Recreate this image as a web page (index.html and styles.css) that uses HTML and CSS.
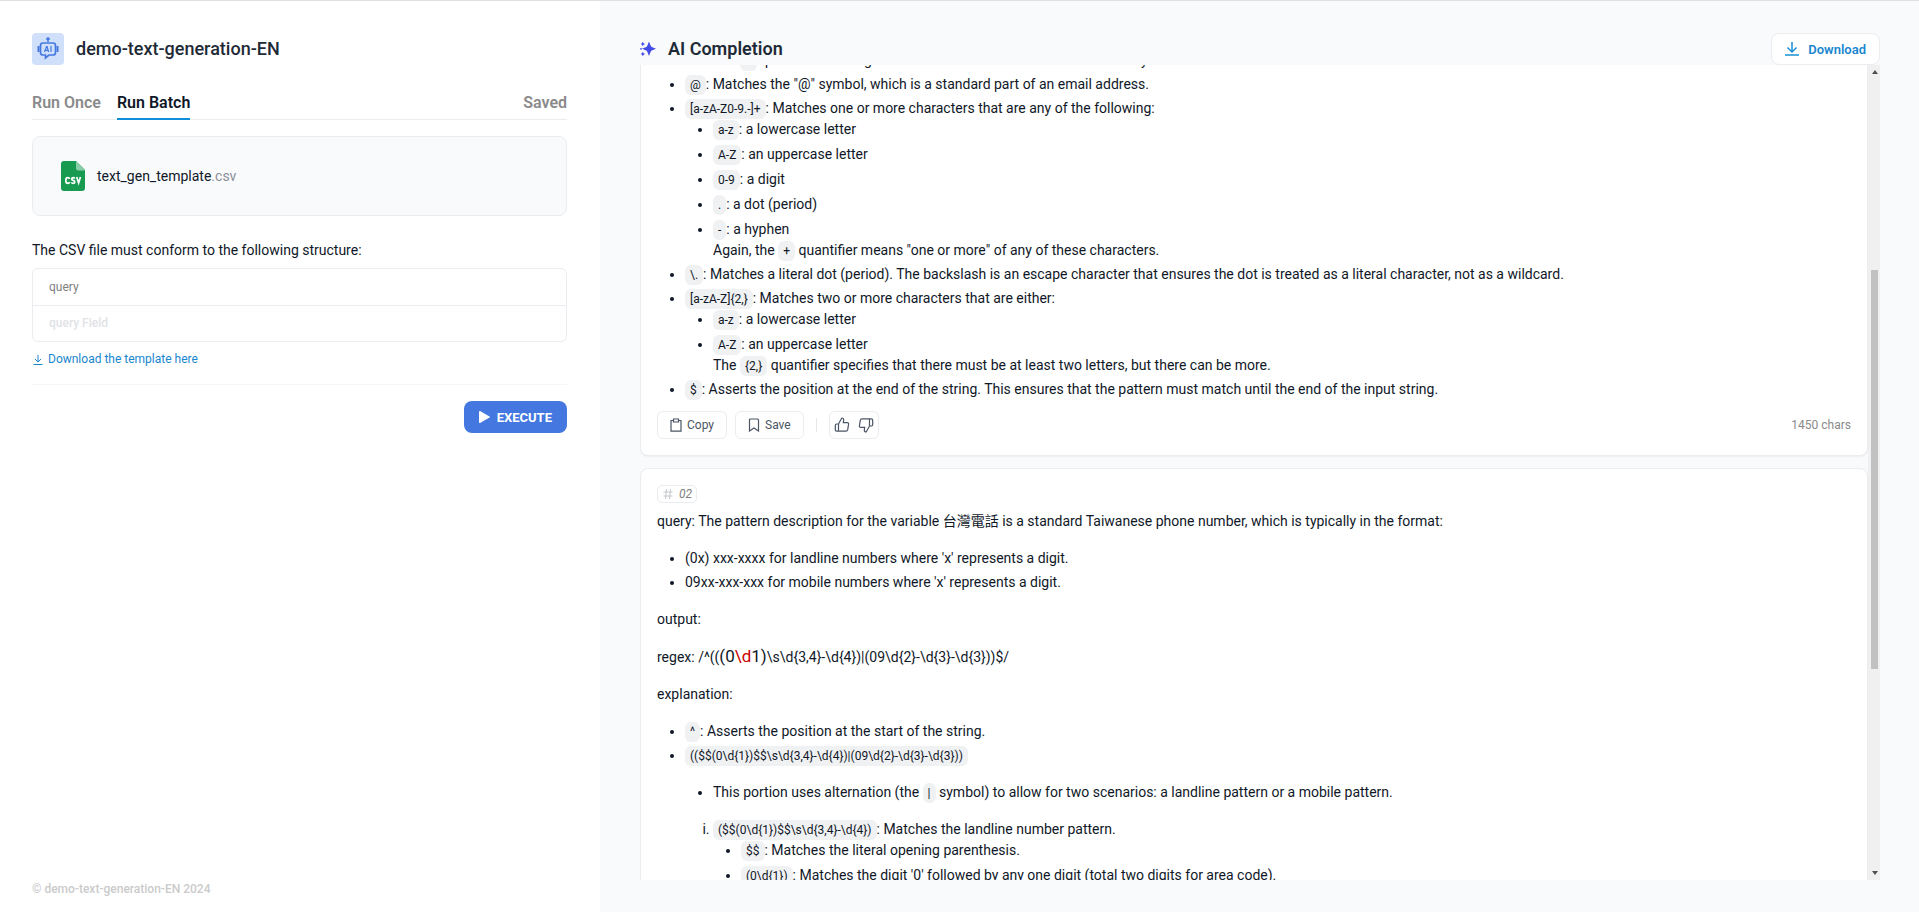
FILE: index.html
```html
<!DOCTYPE html>
<html lang="en">
<head>
<meta charset="utf-8">
<title>demo-text-generation-EN</title>
<link rel="stylesheet" href="styles.css">
</head>
<body>
<div class="app">
  <aside class="side">
    <header class="brand">
      <span class="brand-icon">
        <svg width="22" height="26" viewBox="0 0 22 26" fill="none" stroke="#4478e0" stroke-width="2"><path d="M11 1v5M9 3h4" stroke-width="1.5"/><path d="M6 7h10q2.500 0 2.500 2.500v7q0 2.500-2.500 2.500h-4l-3.500 3v-3H6q-2.500 0-2.500-2.500v-7Q3.500 7 6 7z" stroke-width="1.700"/><path d="M1.500 10v6M20.500 10v6"/><path d="M7.500 16l2-5.500h.6l1.500 5.500M8.500 14.300h2.800M14 10v6" stroke-width="1.200"/></svg>
      </span>
      <h1 class="title name">demo-text-generation-EN</h1>
    </header>
    <nav class="tabs">
      <button class="tab">Run Once</button>
      <button class="tab active">Run Batch</button>
      <button class="tab last">Saved</button>
    </nav>
    <div class="upload">
      <svg width="24" height="30" viewBox="0 0 24 30"><path d="M3 0h12l9 9v18q0 3-3 3H3q-3 0-3-3V3q0-3 3-3z" fill="#189b51"/><path d="M15 0l9 9.500h-7q-2 0-2-2z" fill="#8bcda8"/><g fill="none" stroke="#fff" stroke-width="1.700"><path d="M8.700 18q-.5-1.300-1.800-1.300-2 0-2 2v1.600q0 2 2 2 1.300 0 1.800-1.300"/><path d="M13.800 17.700q-.5-1-1.600-1-1.500 0-1.500 1.300 0 1.100 1.500 1.400 1.600.3 1.600 1.500 0 1.400-1.700 1.400-1.200 0-1.700-1"/><path d="M15.700 16l1.900 6 1.900-6"/></g></svg>
      <span>text_gen_template<span class="muted">.csv</span></span>
    </div>
    <p class="hint">The CSV file must conform to the following structure:</p>
    <table class="schema">
      <thead><tr><th scope="col">query</th></tr></thead>
      <tbody><tr><td>query Field</td></tr></tbody>
    </table>
    <a class="template" href="#"><svg width="10" height="12" viewBox="0 0 10 12" fill="none" stroke="#1a86cf"><path d="M5 1v6.500M2 5l3 3 3-3M.5 10.500h9"/></svg>Download the template here</a>
    <div class="run">
      <button class="execute"><svg width="11" height="12" viewBox="0 0 11 12" fill="#fff"><path d="M0 .5v11q.3.700 1 .4l9.500-5.300q.6-.6 0-1.200L1 .1Q.3-.2 0 .5z"/></svg>EXECUTE</button>
    </div>
    <footer class="copyright">© demo-text-generation-EN 2024</footer>
  </aside>
  <main class="main">
    <header class="main-head">
      <svg width="16" height="16" viewBox="0 0 16 16" fill="#444ce7"><path d="M9 .5l1.700 4.300q.3.800 1.100 1.100L16 7.800l-4.200 1.800q-.8.300-1.100 1.100L9 15l-1.700-4.300q-.3-.8-1.100-1.100L2 7.800l4.200-1.900q.8-.3 1.100-1.100z"/><path d="M2.800.8l.8 1.400 1.400.8-1.400.8-.8 1.400L2 3.800.6 3 2 2.200zM2.800 10.800l.8 1.400 1.400.8-1.400.8-.8 1.400-.8-1.400L.6 13l1.400-.8z"/><circle cx="1" cy="7.800" r=".9"/></svg>
      <h2 class="title">AI Completion</h2>
      <button class="download"><svg width="14" height="14" viewBox="0 0 14 14" fill="none" stroke="#1a90d5" stroke-width="1.500"><path d="M7 0v9.500M2.500 5.500L7 10l4.500-4.500M0 13h14"/></svg>Download</button>
    </header>
    <div class="scroller">
      <div class="results">
        <article class="card">
          <ul class="md">
            <li>
              <ul>
                <li>The <code>+</code> quantifier here signifies one or more of these characters in any.</li>
              </ul>
            </li>
            <li><code>@</code>: Matches the "@" symbol, which is a standard part of an email address.</li>
            <li><code>[a-zA-Z0-9.-]+</code>: Matches one or more characters that are any of the following:
              <ul>
                <li><code>a-z</code>: a lowercase letter</li>
                <li><code>A-Z</code>: an uppercase letter</li>
                <li><code>0-9</code>: a digit</li>
                <li><code>.</code>: a dot (period)</li>
                <li><code>-</code>: a hyphen<br>Again, the <code>+</code> quantifier means "one or more" of any of these characters.</li>
              </ul>
            </li>
            <li><code>\.</code>: Matches a literal dot (period). The backslash is an escape character that ensures the dot is treated as a literal character, not as a wildcard.</li>
            <li><code>[a-zA-Z]{2,}</code>: Matches two or more characters that are either:
              <ul>
                <li><code>a-z</code>: a lowercase letter</li>
                <li><code>A-Z</code>: an uppercase letter<br>The <code>{2,}</code> quantifier specifies that there must be at least two letters, but there can be more.</li>
              </ul>
            </li>
            <li><code>$</code>: Asserts the position at the end of the string. This ensures that the pattern must match until the end of the input string.</li>
          </ul>
          <div class="actions">
            <button class="act"><svg width="12" height="14" viewBox="0 0 12 14" fill="none" stroke="#4b5563" stroke-width="1.200"><path d="M3.500 2.500H1v10.700h10V2.500H8.500"/><path d="M3.500 1h5v3h-5z"/></svg>Copy</button>
            <button class="act"><svg width="12" height="14" viewBox="0 0 12 14" fill="none" stroke="#4b5563" stroke-width="1.200"><path d="M2.500 1h7q1 0 1 1v11L6 10l-4.500 3V2q0-1 1-1z"/></svg>Save</button>
            <span class="sep"></span>
            <span class="votes">
              <button class="vote" aria-label="Like"><svg width="16" height="16" viewBox="0 0 16 16" fill="none" stroke="#4b5563" stroke-width="1.200"><path d="M4.500 7L7.800 1q1.900 0 1.900 2L9.300 5.700h4q1.500 0 1.300 1.500l-.9 5.500q-.3 1.400-1.700 1.400H4.500zM4.500 7H2.700q-1.400 0-1.400 1.400v4.300q0 1.400 1.400 1.400h1.800"/></svg></button>
              <button class="vote" aria-label="Dislike"><svg width="16" height="16" viewBox="0 0 16 16" fill="none" stroke="#4b5563" stroke-width="1.200"><path d="M11.500 9L8.200 15q-1.900 0-1.900-2l.4-2.700h-4Q1.200 10.300 1.400 8.800l.9-5.500Q2.600 1.900 4 1.900h7.500zM11.500 9h1.800q1.400 0 1.400-1.400V3.300q0-1.400-1.400-1.400h-1.800"/></svg></button>
            </span>
            <span class="chars">1450 chars</span>
          </div>
        </article>
        <article class="card">
          <div class="tag"><svg width="10" height="12" viewBox="0 0 10 12" fill="none" stroke="#c4c6ca"><path d="M3.500 1l-1 10M7.500 1l-1 10M.5 4h9M.5 8h9"/></svg>02</div>
          <div class="md">
            <p>query: The pattern description for the variable 台灣電話 is a standard Taiwanese phone number, which is typically in the format:</p>
            <ul>
              <li>(0x) xxx-xxxx for landline numbers where 'x' represents a digit.</li>
              <li>09xx-xxx-xxx for mobile numbers where 'x' represents a digit.</li>
            </ul>
            <p>output:</p>
            <p>regex: /^((<span class="math">(0<span class="err">\d</span>1)</span>\s\d{3,4}-\d{4})|(09\d{2}-\d{3}-\d{3}))$/</p>
            <p>explanation:</p>
            <ul>
              <li><code>^</code>: Asserts the position at the start of the string.</li>
              <li><code>(($$(0\d{1})$$\s\d{3,4}-\d{4})|(09\d{2}-\d{3}-\d{3}))</code>
                <ul class="loose">
                  <li>This portion uses alternation (the <code>|</code> symbol) to allow for two scenarios: a landline pattern or a mobile pattern.</li>
                </ul>
                <ol class="loose">
                  <li><code>($$(0\d{1})$$\s\d{3,4}-\d{4})</code>: Matches the landline number pattern.
                    <ul>
                      <li><code>$$</code>: Matches the literal opening parenthesis.</li>
                      <li><code>(0\d{1})</code>: Matches the digit '0' followed by any one digit (total two digits for area code).</li>
                    </ul>
                  </li>
                </ol>
              </li>
            </ul>
          </div>
        </article>
      </div>
      <div class="bar" aria-hidden="true">
        <svg width="6" height="4" viewBox="0 0 6 4" fill="#505050"><path d="M0 4L3 0l3 4z"/></svg>
        <div class="track"><div class="thumb"></div></div>
        <svg width="6" height="4" viewBox="0 0 6 4" fill="#505050"><path d="M0 0l3 4 3-4z"/></svg>
      </div>
    </div>
  </main>
</div>
</body>
</html>
```
FILE: styles.css
```css
* { box-sizing: border-box; }
body {
  margin: 0;
  font: 14px/21px Roboto, "Noto Sans CJK TC", sans-serif;
  color: #101828;
  background: #f9fafb;
}
h1, h2, p, ul, ol { margin: 0; }
svg { flex: none; }
button {
  font: inherit;
  color: inherit;
  background: none;
  border: 0;
  padding: 0;
}
.app {
  display: flex;
  height: 100vh;
  border-top: 1px solid #e0e0e0;
}

/* Left panel */
.side {
  display: flex;
  flex-direction: column;
  flex: none;
  width: 600px;
  padding: 32px 33px 12px 32px;
  background: #fff;
}
.brand { display: flex; align-items: center; gap: 12px; }
.brand-icon {
  display: flex;
  align-items: center;
  justify-content: center;
  width: 32px;
  height: 32px;
  border-radius: 4px;
  background: #d1e0fa;
}
.title {
  font-size: 18px;
  line-height: 32px;
  font-weight: 600;
  color: #1f2a37;
}
.name { font-weight: 500; }
.tabs {
  display: flex;
  gap: 16px;
  margin-top: 21px;
  border-bottom: 1px solid #eaecf0;
}
.tab {
  height: 34px;
  margin-bottom: -1px;
  font-size: 16px;
  font-weight: 600;
  color: #8a8a8a;
  border-bottom: 2px solid transparent;
}
.tab.active { color: #101828; border-color: #0e8fd8; }
.tab.last { margin-left: auto; }
.upload {
  display: flex;
  align-items: center;
  gap: 12px;
  height: 80px;
  margin-top: 16px;
  padding: 0 28px;
  border: 1px solid #eaecf0;
  border-radius: 8px;
  background: #f9fafb;
}
.muted { color: #8a8f99; }
.hint { margin-top: 24px; }
.schema {
  margin-top: 7px;
  border: 1px solid #eaecf0;
  border-radius: 6px;
  border-spacing: 0;
  font-size: 12px;
}
.schema th, .schema td {
  height: 36px;
  padding: 0 16px;
  text-align: left;
  font-weight: 400;
  color: #808080;
}
.schema td {
  font-weight: 500;
  color: #e1e3e6;
  border-top: 1px solid #eaecf0;
}
.template {
  display: flex;
  align-items: center;
  gap: 5px;
  margin-top: 7px;
  padding-left: 1px;
  font-size: 12px;
  color: #1a86cf;
  text-decoration: none;
}
.run {
  display: flex;
  justify-content: flex-end;
  margin-top: 14px;
  padding-top: 16px;
  border-top: 1px solid #f5f6f7;
}
.execute {
  display: flex;
  align-items: center;
  gap: 7px;
  height: 32px;
  padding: 0 15px;
  border-radius: 8px;
  background: #4478e0;
  color: #fff;
  font-size: 13px;
  font-weight: 700;
}
.copyright {
  margin-top: auto;
  font-size: 12px;
  font-weight: 500;
  color: #cbcbcb;
}

/* Right panel */
.main {
  display: flex;
  flex-direction: column;
  flex: 1;
  min-width: 0;
  padding: 32px 39px 32px 40px;
}
.main-head { display: flex; align-items: center; gap: 12px; }
.download {
  display: flex;
  align-items: center;
  gap: 9px;
  height: 32px;
  margin-left: auto;
  padding: 0 13px;
  border: 1px solid #eaecf0;
  border-radius: 8px;
  background: #fff;
  color: #1a86cf;
  font-size: 13px;
  font-weight: 600;
}
.scroller { display: flex; flex: 1; min-height: 0; }
.results {
  display: flex;
  flex-direction: column;
  gap: 12px;
  flex: 1;
  min-width: 0;
  overflow: hidden;
}
.card {
  flex: none;
  padding: 16px;
  border: 1px solid #eaecf0;
  border-radius: 8px;
  background: #fff;
  box-shadow: 0 1px 2px rgba(16, 24, 40, .05);
}
.card:first-child { margin-top: -32px; }
.md > p + *, .md > ul + p, .md .loose { margin-top: 16px; }
ul, ol { padding-left: 28px; }
ul { list-style: disc; }
ol { list-style: lower-roman; }
.md li + li { margin-top: 3px; }
.md li li + li { margin-top: 4px; }
code {
  padding: 3px 5px;
  border-radius: 6px;
  background: #f0f1f3;
  font: 12px Roboto, sans-serif;
}
.math { font-size: 17px; line-height: 20px; }
.err { color: #cc0000; }
.actions {
  display: flex;
  align-items: center;
  gap: 8px;
  margin-top: 11px;
  font-size: 12px;
  color: #4b5563;
}
.act {
  display: flex;
  align-items: center;
  gap: 5px;
  height: 28px;
  padding: 0 12px;
  border: 1px solid #eaecf0;
  border-radius: 6px;
}
.sep { width: 1px; height: 14px; margin: 0 4px; background: #e5e7eb; }
.votes {
  display: flex;
  align-items: center;
  gap: 8px;
  height: 28px;
  padding: 0 4px;
  border: 1px solid #eaecf0;
  border-radius: 6px;
}
.vote { display: flex; }
.chars { margin-left: auto; color: #8a8a8a; }
.tag {
  display: flex;
  align-items: center;
  gap: 6px;
  width: fit-content;
  height: 18px;
  margin-bottom: 8px;
  padding: 0 4px 0 5px;
  border: 1px solid #eaecf0;
  border-radius: 5px;
  font-size: 12px;
  font-style: italic;
  color: #808080;
}
.bar {
  display: flex;
  flex-direction: column;
  align-items: center;
  width: 12px;
  padding: 5px 2px 5px 3px;
  background: #f0f0f0;
}
.track { flex: 1; width: 100%; }
.thumb { height: 50%; margin-top: 196px; background: #c1c1c1; }
```
